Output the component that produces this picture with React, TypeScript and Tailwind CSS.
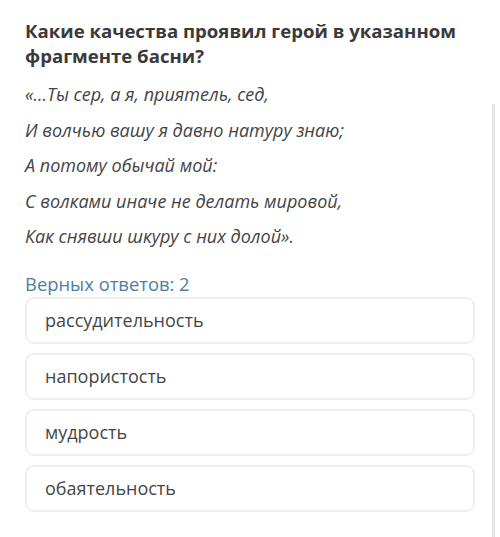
const lines = [
  "«...Ты сер, а я, приятель, сед,",
  "И волчью вашу я давно натуру знаю;",
  "А потому обычай мой:",
  "С волками иначе не делать мировой,",
  "Как снявши шкуру с них долой».",
];

const options = ["рассудительность", "напористость", "мудрость", "обаятельность"];

export default function App() {
  return (
    <div
      className="flex w-[500px] h-[537px] bg-white overflow-hidden"
      style={{ fontFamily: '"Open Sans", "Noto Sans", sans-serif' }}
    >
      <div className="w-[492px] pl-[25px] pr-[17px] pt-[18px]">
        <h2 className="text-[18.6px] leading-[25px] font-bold text-[#3a3a3a]">
          Какие качества проявил герой в указанном фрагменте басни?
        </h2>
        <div className="mt-[9px] flex flex-col">
          {lines.map((l) => (
            <p key={l} className="italic text-[18px] leading-[35.5px] text-[#444]">
              {l}
            </p>
          ))}
        </div>
        <p className="mt-[18px] text-[18.4px] leading-[22px] text-[#4f7ea6]">Верных ответов: 2</p>
        <div className="mt-[2px] flex flex-col gap-[9px]">
          {options.map((o) => (
            <div
              key={o}
              className="h-[47px] flex items-center pl-[18px] pr-[20px] rounded-[9px] border-2 border-[#efefef] text-[18px] text-[#454545]"
            >
              {o}
            </div>
          ))}
        </div>
      </div>
      <div className="mt-[104px] w-[3px] bg-[#e6e6e6]" />
    </div>
  );
}
